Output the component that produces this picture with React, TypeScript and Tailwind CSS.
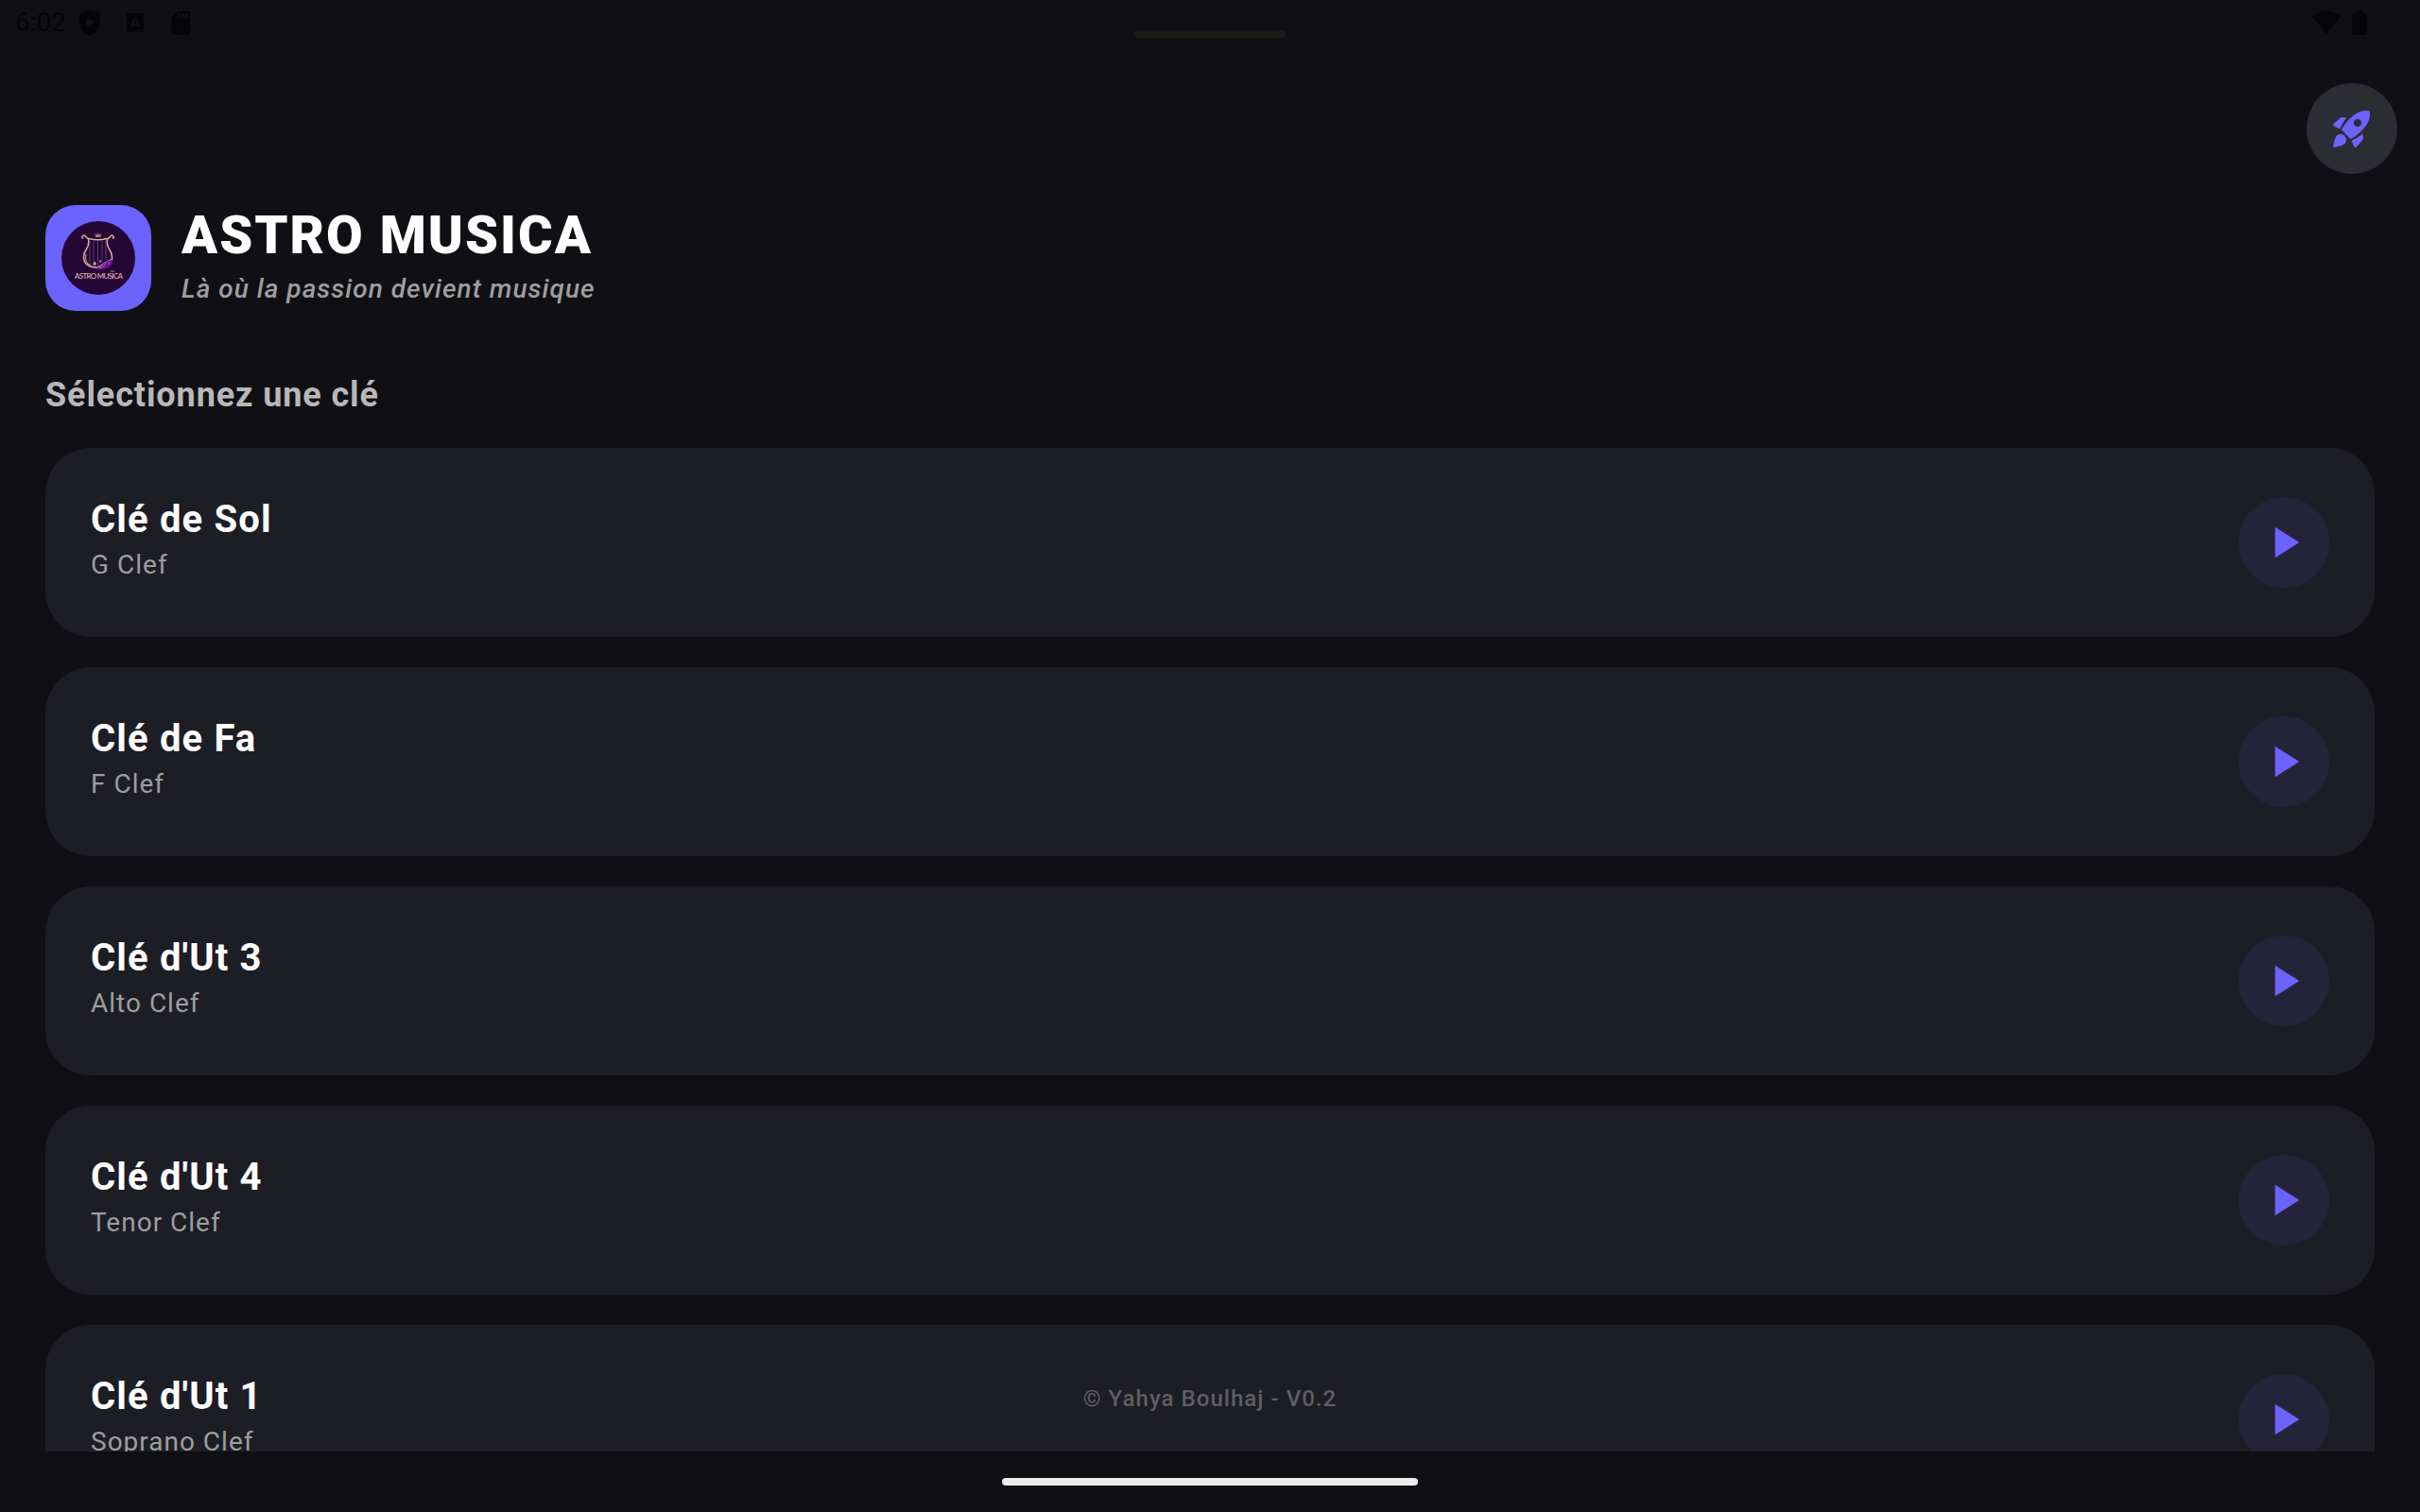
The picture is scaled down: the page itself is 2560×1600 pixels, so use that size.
import React, { FC } from 'react';

const clefs = [
  { title: 'Clé de Sol', subtitle: 'G Clef' },
  { title: 'Clé de Fa', subtitle: 'F Clef' },
  { title: "Clé d'Ut 3", subtitle: 'Alto Clef' },
  { title: "Clé d'Ut 4", subtitle: 'Tenor Clef' },
  { title: "Clé d'Ut 1", subtitle: 'Soprano Clef' },
];

const StatusBar: FC = () => (
  <div className="flex h-12 shrink-0 items-start justify-between text-[#050507]">
    <div className="flex w-[201px] items-start pl-4">
      <span className="mt-1 w-[68px] text-[28px] leading-10">6:02</span>
      <svg className="mt-[10px] h-7 w-[22px]" viewBox="0 0 22 28" fill="currentColor">
        <path
          fillRule="evenodd"
          d="M11 0L22 4.2V13C22 20 17.3 25.8 11 28C4.7 25.8 0 20 0 13V4.2ZM7.300 8.500V18.500L16.500 13.500Z"
        />
      </svg>
      <svg className="mt-[14px] ml-7 h-5 w-[18px]" viewBox="0 0 18 20">
        <rect width="18" height="20" rx="1" fill="currentColor" />
        <path d="M5 15L8.200 5.500H9.800L13 15M6.300 12H11.700" fill="none" stroke="#101014" strokeWidth="2" />
        <path d="M10 18H12M13 18H14.500M15.500 18H17" stroke="#101014" strokeWidth="1.500" />
      </svg>
      <svg className="mt-3 ml-[29px] h-[25px] w-5" viewBox="0 0 20 25">
        <path d="M7 0H18Q20 0 20 2V23Q20 25 18 25H2Q0 25 0 23V7Z" fill="currentColor" />
        <path d="M8.500 2V7M12.500 2V7M16.500 2V7" stroke="#101014" strokeWidth="2.500" />
      </svg>
    </div>
    <div className="mt-8 h-2 w-40 rounded-full bg-[#1c1c15]" />
    <div className="flex w-[201px] items-start justify-end pt-[11px] pr-14">
      <svg className="h-[25px] w-[30px]" viewBox="0 0 30 25" fill="currentColor">
        <path d="M0 6.500Q15 -6.500 30 6.500L15 25Z" />
      </svg>
      <svg className="ml-3 h-[26px] w-4" viewBox="0 0 16 26" fill="currentColor">
        <path d="M5 0H11V2.500H14.500Q16 2.500 16 4V24.500Q16 26 14.500 26H1.500Q0 26 0 24.500V4Q0 2.500 1.500 2.500H5Z" />
      </svg>
    </div>
  </div>
);

const RocketIcon: FC = () => (
  <svg className="h-12 w-12" viewBox="0 0 24 24" fill="#6c63ff">
    {/* fins */}
    <path d="M9.190 6.350C7.150 8.640 5.750 11.930 5.620 12.240L2.810 11.030C2.140 10.740 1.970 9.880 2.480 9.370L5.570 6.640C6.040 6.170 6.720 5.960 7.380 6.090Z" />
    <path d="M17.650 14.810C15.360 16.850 12.070 18.250 11.760 18.380L12.970 21.190C13.260 21.860 14.120 22.030 14.630 21.520L17.360 18.430C17.830 17.960 18.040 17.280 17.910 16.620Z" />
    {/* body with the porthole cut out */}
    <path
      fillRule="evenodd"
      d="M11.700 17.350C12.900 16.800 15.400 14.960 17.060 13.300C21.600 8.760 21.680 4.950 21.500 3.200C21.460 2.800 21.200 2.540 20.800 2.500C19.050 2.320 15.240 2.400 10.700 6.940C9.040 8.600 7.200 11.100 6.650 12.300C6.550 12.600 6.600 12.800 6.800 13L11 17.200C11.200 17.400 11.400 17.450 11.700 17.350ZM15 11A2 2 0 1 0 15 7A2 2 0 1 0 15 11Z"
    />
    <path d="M9 18C9 18.830 8.660 19.580 8.120 20.120C7.100 21.140 3.200 21.800 2.400 21.920C2.180 21.950 2.050 21.820 2.080 21.600C2.200 20.800 2.860 16.900 3.880 15.880C4.420 15.340 5.170 15 6 15C7.660 15 9 16.340 9 18Z" />
  </svg>
);

const Logo: FC = () => (
  <div className="flex h-28 w-28 items-center justify-center rounded-[32px] bg-[#6c63ff]">
    <svg className="h-[78px] w-[78px]" viewBox="0 0 78 78" fill="none">
      <circle cx="39" cy="39" r="39" fill="#250736" />
      {/* strings */}
      <path d="M30 21V46M34 21V48M38.500 21V47M43 21V44M47 21V41" stroke="#5d3a62" strokeWidth="1" />
      {/* lyre frame */}
      <g stroke="#e0ac9e" strokeWidth="1.500">
        <path d="M23 18.500C21 17 22 15 24 15.200C27 16 26.500 19 29 18.500Q38.500 21 48 18.500C51 19 50.500 16 53 15.200C55.500 15 56 17.500 54 18.500" />
        <path d="M28.500 19C30.500 30 23.500 29 23.500 38C23.500 45 29 49 37 49C43 48.500 46 42 53 41" />
        <path d="M48.500 19C46.500 30 53.500 29 53.500 38V41" />
        <path d="M26 35Q24 44 31 47" strokeWidth="1" />
      </g>
      {/* crown */}
      <path d="M35 12.500L36 16H41.500L42.500 12.500L40.500 14.500L38.700 12.500L37 14.500Z" fill="#9a6676" />
      <path d="M36 16.200H41.500" stroke="#e0ac9e" strokeWidth="1" />
      {/* drapery */}
      <path d="M36 51C43 50 44 41 54 41C56 47 48 52 36 51Z" fill="#6a1290" />
      <path d="M40 50Q46 49 47 43M50 43V46" stroke="#b34bd0" strokeWidth="1.200" />
      <path d="M33.500 45H37M35.200 43V47M41 41V44" stroke="#f3ccd0" strokeWidth="1" />
      <path d="M52 53H56" stroke="#d98672" strokeWidth="1" />
      <text x="14" y="61.300" textLength="51" fontSize="8" fill="#e9bfc0" fontFamily="Lato, sans-serif">
        ASTRO MUSICA
      </text>
    </svg>
  </div>
);

const ClefCard: FC<{ title: string; subtitle: string }> = ({ title, subtitle }) => (
  <div className="flex h-[200px] shrink-0 justify-between rounded-[48px] bg-[#1d1d25] p-12">
    <div className="pt-px">
      <h2 className="text-[40px] leading-[54px] font-bold tracking-[1.15px] text-white">{title}</h2>
      <p className="text-[28px] leading-[42px] tracking-[1px] text-[#9e9e9e]">{subtitle}</p>
    </div>
    <div className="flex h-24 w-24 items-center justify-center self-center rounded-full bg-[#252339]">
      <svg className="h-14 w-14" viewBox="0 0 24 24" fill="#6c63ff">
        <path d="M8 5v14l11-7z" />
      </svg>
    </div>
  </div>
);

const App: FC = () => {
  return (
    <div className="relative flex h-[1600px] w-[2560px] flex-col overflow-hidden bg-[#101014] font-[Roboto,sans-serif]">
      <StatusBar />
      <div className="mt-10 mr-6 flex h-24 w-24 shrink-0 items-center justify-center self-end rounded-full bg-[#2c2c35]">
        <RocketIcon />
      </div>

      <header className="mt-[33px] flex h-28 shrink-0 gap-8 px-12">
        <Logo />
        <div>
          <h1 className="text-[56px] leading-16 font-black tracking-[2px] text-white">ASTRO MUSICA</h1>
          <p className="mt-[5px] text-[28px] leading-10 font-medium tracking-[1.03px] text-[#9e9e9e] italic">
            Là où la passion devient musique
          </p>
        </div>
      </header>

      <h3 className="mt-[65px] mb-8 shrink-0 px-12 text-4xl leading-[48px] font-bold tracking-[0.9px] text-[#b8b8b8]">
        Sélectionnez une clé
      </h3>

      <main className="flex min-h-0 flex-1 flex-col gap-8 overflow-hidden px-12">
        {clefs.map((clef) => (
          <ClefCard key={clef.title} title={clef.title} subtitle={clef.subtitle} />
        ))}
      </main>

      <div className="flex h-16 shrink-0 items-start justify-center pt-7">
        <div className="h-2 w-[440px] rounded-full bg-[#ececea]" />
      </div>

      {/* Credit floats over the list */}
      <p className="absolute inset-x-0 bottom-[104px] text-center text-2xl leading-8 font-medium tracking-[1.05px] text-[#5f5f63]">
        © Yahya Boulhaj - V0.2
      </p>
    </div>
  );
};

export default App;
